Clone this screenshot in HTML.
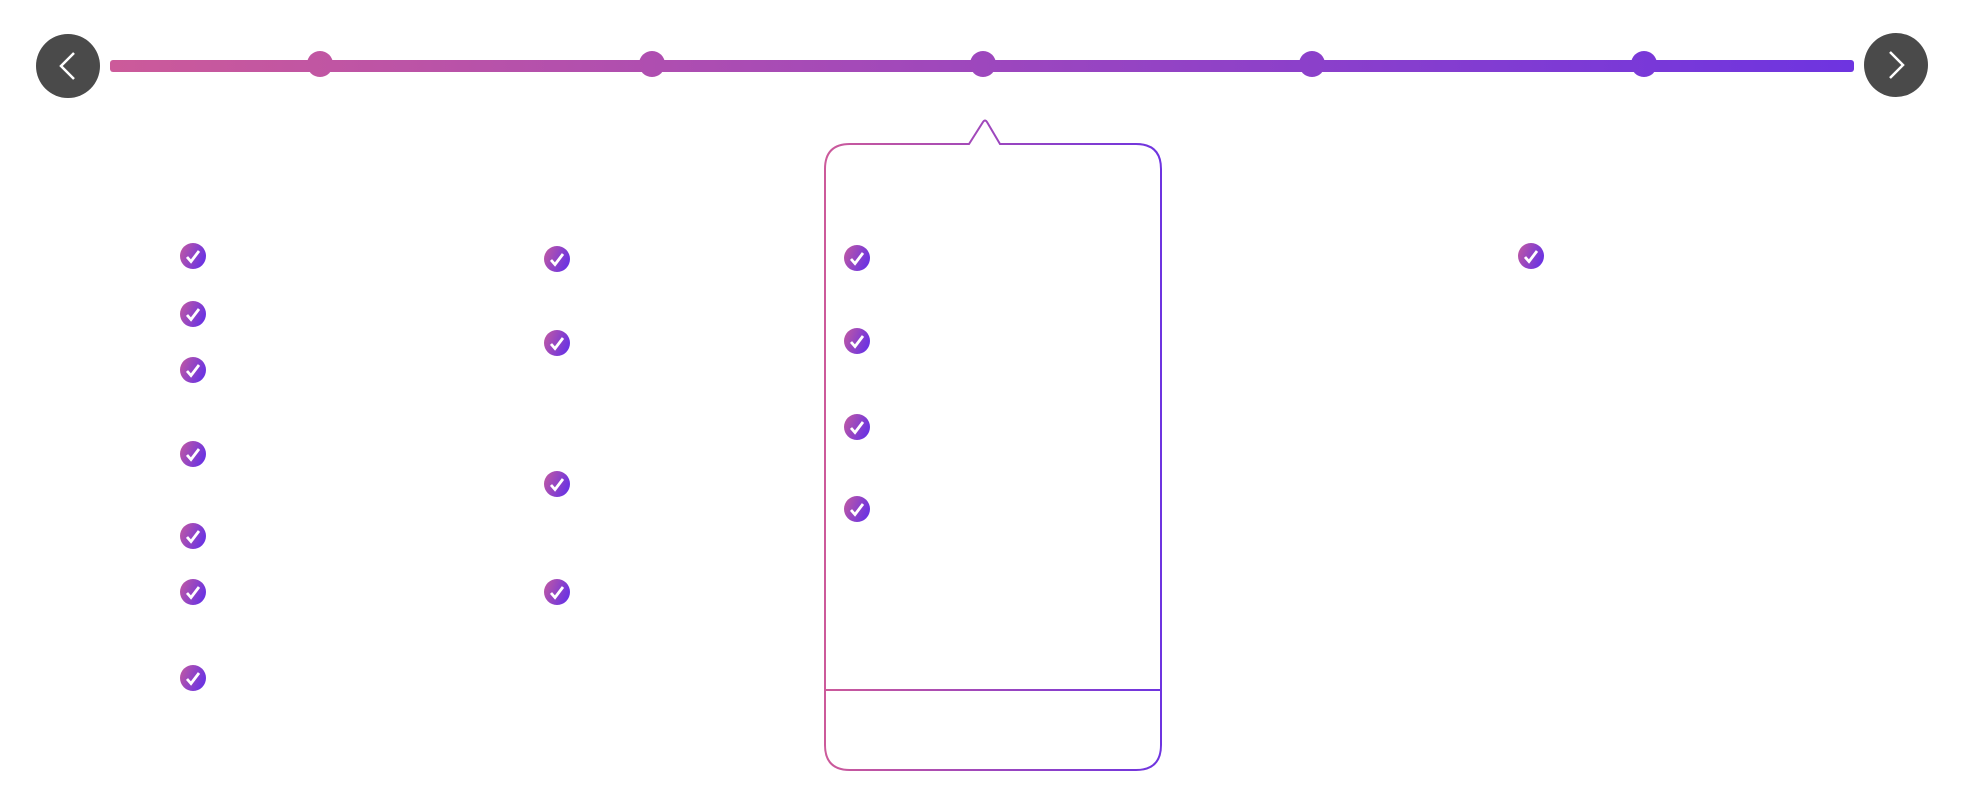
<!DOCTYPE html>
<html><head><meta charset="utf-8"><style>html,body{margin:0;padding:0;background:#fff;width:1971px;height:804px;overflow:hidden}</style></head>
<body>
<svg width="1971" height="804" viewBox="0 0 1971 804" xmlns="http://www.w3.org/2000/svg">
<defs>
<linearGradient id="tg" gradientUnits="userSpaceOnUse" x1="110" x2="1854" y1="0" y2="0"><stop offset="0" stop-color="#cc5a9a"/><stop offset="1" stop-color="#6e34e0"/></linearGradient>
<linearGradient id="bg" gradientUnits="userSpaceOnUse" x1="825" x2="1161" y1="0" y2="0"><stop offset="0" stop-color="#cc5a9a"/><stop offset="1" stop-color="#6e34e0"/></linearGradient>
<linearGradient id="cg" x1="0" y1="0" x2="1" y2="0.4"><stop offset="0" stop-color="#c45aa0"/><stop offset="1" stop-color="#6e34e0"/></linearGradient>
<g id="ck"><circle r="13" fill="url(#cg)"/><path d="M-6,1 L-2,5.5 L6,-5" fill="none" stroke="#fff" stroke-width="2.8"/></g>
</defs>
<circle cx="68" cy="66" r="32" fill="#4a4a4a"/>
<path d="M74,53 L61,66 L74,79" fill="none" stroke="#fff" stroke-width="2.5"/>
<circle cx="1896" cy="65" r="32" fill="#4a4a4a"/>
<path d="M1890,52 L1903,65 L1890,78" fill="none" stroke="#fff" stroke-width="2.5"/>
<rect x="110" y="60" width="1744" height="12" rx="3" fill="url(#tg)"/>
<g fill="url(#tg)">
<circle cx="320" cy="64" r="13"/><circle cx="652" cy="64" r="13"/><circle cx="983" cy="64" r="13"/><circle cx="1312" cy="64" r="13"/><circle cx="1644" cy="64" r="13"/>
</g>
<path d="M850,144 L969,144 L983,122 Q985,119 987,122 L1000,144 L1136,144 Q1161,144 1161,169 L1161,745 Q1161,770 1136,770 L850,770 Q825,770 825,745 L825,169 Q825,144 850,144 Z" fill="none" stroke="url(#bg)" stroke-width="2"/>
<line x1="825" y1="690" x2="1161" y2="690" stroke="url(#bg)" stroke-width="2"/>
<use href="#ck" x="193" y="256"/><use href="#ck" x="193" y="314"/><use href="#ck" x="193" y="370"/><use href="#ck" x="193" y="454"/><use href="#ck" x="193" y="536"/><use href="#ck" x="193" y="592"/><use href="#ck" x="193" y="678"/>
<use href="#ck" x="557" y="259"/><use href="#ck" x="557" y="343"/><use href="#ck" x="557" y="484"/><use href="#ck" x="557" y="592"/>
<use href="#ck" x="857" y="258"/><use href="#ck" x="857" y="341"/><use href="#ck" x="857" y="427"/><use href="#ck" x="857" y="509"/>
<use href="#ck" x="1531" y="256"/>
</svg>
</body></html>
